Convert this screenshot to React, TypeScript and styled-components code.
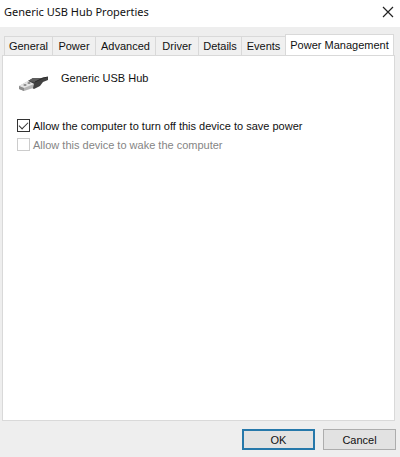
import React, { useState } from "react";
import styled, { createGlobalStyle } from "styled-components";

const GlobalStyle = createGlobalStyle`
  *, *::before, *::after { box-sizing: border-box; }
  html, body, #root { height: 100%; }
  body {
    margin: 0;
    background: #eee;
    color: #111;
    font: 11px/14px "Liberation Sans", Arial, sans-serif;
  }
  button, input { font: inherit; color: inherit; margin: 0; }
`;

const Dialog = styled.main`
  display: flex;
  flex-direction: column;
  min-height: 100%;
`;

const TitleBar = styled.header`
  display: flex;
  align-items: center;
  justify-content: space-between;
  height: 27px;
  padding: 0 5px 3px 4px;
  background: #fff;
`;

const Title = styled.h1`
  margin: 0;
  font: 400 11px/16px "Noto Sans", "Open Sans", sans-serif;
`;

const CloseButton = styled.button`
  display: grid;
  place-items: center;
  padding: 1px;
  border: 0;
  background: none;
`;

const Content = styled.div`
  display: flex;
  flex: 1;
  flex-direction: column;
  padding: 7px 5px 0 2px;
`;

const TabList = styled.div`
  display: grid;
  grid-template-columns: 48fr 43fr 60fr 43fr 43fr 44fr 109fr;
  align-items: end;
  height: 21px;
  padding: 0 1px 0 2px;
`;

const Tab = styled.button<{ $active: boolean }>`
  height: ${(p) => (p.$active ? 22 : 19)}px;
  margin-bottom: ${(p) => (p.$active ? -1 : 0)}px;
  padding: ${(p) => (p.$active ? "0 0 2px" : "0")};
  border: 1px solid #d9d9d9;
  border-bottom: 0;
  border-right-width: ${(p) => (p.$active ? 1 : 0)}px;
  background: ${(p) => (p.$active ? "#fff" : "#f0f0f0")};
  white-space: nowrap;
`;

const Panel = styled.section`
  display: flex;
  flex: 1;
  flex-direction: column;
  border: 1px solid #d9d9d9;
  background: #fff;
  padding: 15px 14px;
`;

const Device = styled.div`
  display: flex;
  align-items: flex-start;
  gap: 12px;
  height: 45px;
`;

const Option = styled.label<{ $muted?: boolean }>`
  display: flex;
  align-items: center;
  gap: 3px;
  height: 19px;
  color: ${(p) => (p.$muted ? "#858585" : "#111")};
`;

const Checkbox = styled.input`
  appearance: none;
  display: grid;
  place-items: center;
  width: 13px;
  height: 13px;
  border: 1px solid #333;
  background: #fff;
  &:disabled { border-color: #ccc; }
  &:checked::after {
    content: "";
    width: 9px;
    height: 5px;
    margin-bottom: 3px;
    border: solid #333;
    border-width: 0 0 1px 1px;
    transform: rotate(-45deg);
  }
`;

const Footer = styled.footer`
  display: flex;
  justify-content: flex-end;
  gap: 8px;
  padding: 8px 4px 7px;
`;

const ActionButton = styled.button<{ $primary?: boolean }>`
  width: 73px;
  height: 21px;
  padding: 0;
  border: ${(p) => (p.$primary ? "2px solid #2678aa" : "1px solid #adadad")};
  background: #e2e2e2;
`;

const UsbIcon = () => (
  <svg width="32" height="22" viewBox="0 -2 32 22" aria-hidden="true">
    <path d="M11 8 16 5 24 5 31 4 31 7 26 9 23 13 17 16 12 13Z" fill="#424242" />
    <path d="M11 8 16 5 25 5 18 9Z" fill="#5e5e5e" />
    <path d="M2 13 11 8 17 11 16 15 7 18 2 16Z" fill="#b4b4b4" />
    <path d="M2 13 11 8 17 11 7 15Z" fill="#e4e4e4" />
    <path d="M2 13 7 15 7 18 2 16Z" fill="#8c8c8c" />
    <path d="m6 12 2-1 2 1-2 1Zm4-2 2-1 2 1-2 1Z" fill="#777" />
    <path d="m18 9 8-4 5-1" fill="none" stroke="#2c2c2c" />
  </svg>
);

const tabs = ["General", "Power", "Advanced", "Driver", "Details", "Events", "Power Management"];

export default function App() {
  const [active, setActive] = useState("Power Management");
  const [allowOff, setAllowOff] = useState(true);
  return (
    <>
      <GlobalStyle />
      <Dialog>
        <TitleBar>
          <Title>Generic USB Hub Properties</Title>
          <CloseButton aria-label="Close">
            <svg width="12" height="12" viewBox="0 0 12 12" aria-hidden="true">
              <path d="m1 1 10 10M11 1 1 11" stroke="#222" strokeWidth="1.2" />
            </svg>
          </CloseButton>
        </TitleBar>
        <Content>
          <TabList role="tablist">
            {tabs.map((name) => (
              <Tab key={name} role="tab" aria-selected={active === name} $active={active === name} onClick={() => setActive(name)}>
                {name}
              </Tab>
            ))}
          </TabList>
          <Panel role="tabpanel" aria-label={active}>
            <Device>
              <UsbIcon />
              <span>Generic USB Hub</span>
            </Device>
            <Option>
              <Checkbox type="checkbox" checked={allowOff} onChange={(e) => setAllowOff(e.target.checked)} />
              Allow the computer to turn off this device to save power
            </Option>
            <Option $muted>
              <Checkbox type="checkbox" disabled />
              Allow this device to wake the computer
            </Option>
          </Panel>
        </Content>
        <Footer>
          <ActionButton $primary>OK</ActionButton>
          <ActionButton>Cancel</ActionButton>
        </Footer>
      </Dialog>
    </>
  );
}
